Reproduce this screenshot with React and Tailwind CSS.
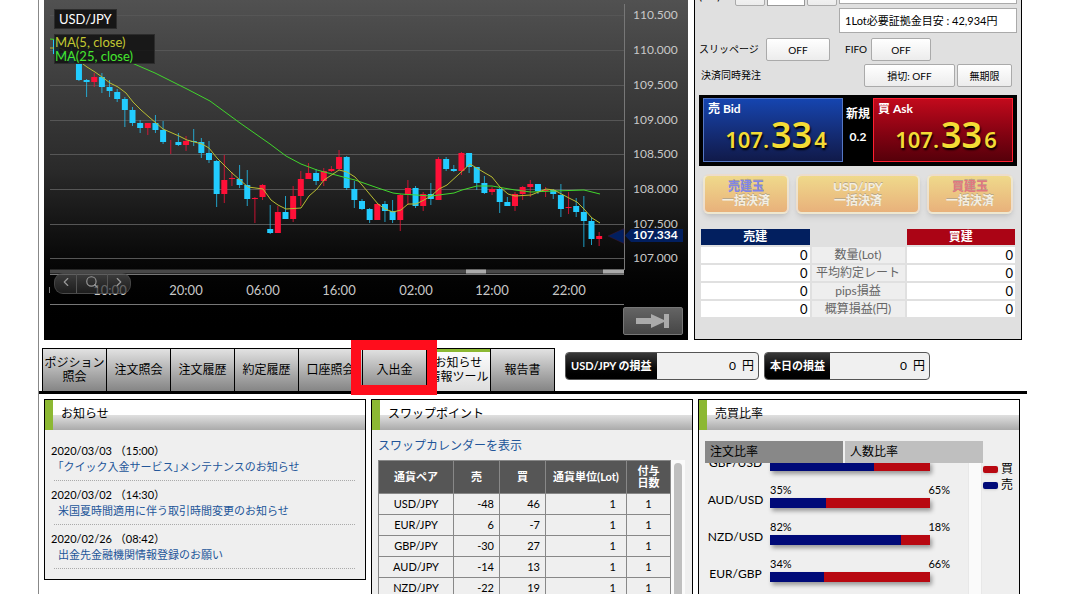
import React from "react";
import { ChevronLeft, ChevronRight, Search } from "lucide-react";

const UP = "#ff1038";
const DOWN = "#22ccff";

// [direction, high, low, body top, body bottom]
const CANDLES = [
  ["d", 38, 55, 39, 54],
  ["d", 50, 60, 53, 57],
  ["d", 47, 63, 56, 63],
  ["d", 62, 81, 63, 80],
  ["d", 79, 97, 80, 82],
  ["u", 73, 87, 77, 82],
  ["d", 73, 93, 77, 87],
  ["d", 80, 97, 87, 91],
  ["d", 89, 102, 92, 99],
  ["d", 97, 127, 99, 110],
  ["d", 107, 126, 110, 123],
  ["d", 120, 133, 123, 128],
  ["u", 123, 135, 123, 128],
  ["d", 115, 133, 123, 130],
  ["d", 121, 144, 130, 142],
  ["u", 140, 154, 142, 142],
  ["d", 133, 146, 142, 145],
  ["u", 136, 151, 141, 145],
  ["d", 129, 146, 141, 142],
  ["d", 138, 158, 142, 153],
  ["d", 141, 163, 153, 160],
  ["d", 160, 207, 161, 194],
  ["u", 155, 203, 180, 194],
  ["u", 172, 186, 178, 179],
  ["d", 165, 188, 179, 185],
  ["d", 170, 206, 185, 199],
  ["u", 197, 223, 198, 199],
  ["u", 184, 200, 185, 197],
  ["d", 205, 234, 229, 233],
  ["u", 206, 233, 212, 233],
  ["d", 196, 219, 212, 219],
  ["u", 186, 222, 196, 219],
  ["u", 171, 206, 179, 196],
  ["u", 163, 179, 173, 179],
  ["d", 169, 185, 173, 181],
  ["u", 168, 186, 171, 181],
  ["u", 166, 172, 169, 171],
  ["u", 150, 170, 157, 169],
  ["d", 156, 190, 157, 188],
  ["d", 181, 208, 189, 200],
  ["d", 199, 210, 201, 209],
  ["d", 208, 223, 209, 220],
  ["u", 203, 220, 204, 220],
  ["d", 201, 222, 204, 211],
  ["d", 200, 223, 211, 220],
  ["u", 194, 231, 195, 220],
  ["u", 180, 205, 188, 195],
  ["d", 186, 208, 188, 206],
  ["u", 192, 211, 194, 206],
  ["d", 183, 205, 194, 199],
  ["u", 157, 200, 159, 200],
  ["d", 157, 171, 159, 169],
  ["d", 165, 172, 169, 171],
  ["u", 152, 175, 153, 171],
  ["d", 153, 173, 153, 167],
  ["d", 167, 190, 167, 183],
  ["d", 176, 194, 183, 193],
  ["u", 187, 195, 189, 192],
  ["d", 188, 213, 189, 202],
  ["d", 197, 206, 202, 206],
  ["u", 192, 211, 194, 206],
  ["u", 186, 200, 187, 194],
  ["u", 180, 197, 184, 187],
  ["d", 184, 194, 184, 191],
  ["u", 187, 197, 190, 191],
  ["d", 189, 199, 190, 194],
  ["d", 184, 217, 195, 209],
  ["u", 192, 214, 207, 208],
  ["d", 198, 217, 206, 212],
  ["d", 196, 247, 212, 221],
  ["d", 218, 245, 221, 239],
  ["u", 232, 246, 236, 239],
];

const MA5 =
  "50,48 60,48 70,53 79,61 87,67 95,72 102,77 110,83 118,87 126,93 133,102 141,110 149,117 156,123 163,129 179,136 187,140 202,144 209,148 217,158 224,165 232,173 248,187 263,189 271,200 278,205 286,209 301,208 309,196 317,189 324,180 339,170 347,172 355,177 362,185 378,204 385,209 393,212 401,210 408,204 416,204 424,200 431,196 439,189 447,185 470,164 485,173 492,177 500,187 508,194 515,196 531,195 546,189 554,190 569,198 577,202 584,209 592,218 600,223";
const MA25 =
  "50,39 60,40 100,50 125,60 155,73 187,89 210,101 240,123 270,144 286,156 301,164 317,170 332,174 347,178 355,180 378,188 393,193 401,194 416,195 431,196 454,193 462,190 477,186 492,186 515,190 531,192 554,191 584,190 600,194";

const PRICES = [
  ["110.500", 15],
  ["110.000", 50],
  ["109.500", 85],
  ["109.000", 120],
  ["108.500", 154],
  ["108.000", 189],
  ["107.500", 224],
  ["107.000", 258],
];
const TIMES = [
  ["10:00", 110],
  ["20:00", 186],
  ["06:00", 263],
  ["16:00", 339],
  ["02:00", 416],
  ["12:00", 492],
  ["22:00", 569],
];

const SWAPS = [
  ["USD/JPY", -48, 46],
  ["EUR/JPY", 6, -7],
  ["GBP/JPY", -30, 27],
  ["AUD/JPY", -14, 13],
  ["NZD/JPY", -22, 19],
];

const NEWS = [
  ["2020/03/03 （15:00）", "「クイック入金サービス」メンテナンスのお知らせ"],
  ["2020/03/02 （14:30）", "米国夏時間適用に伴う取引時間変更のお知らせ"],
  ["2020/02/26 （08:42）", "出金先金融機関情報登録のお願い"],
];

const RATIOS = [
  ["GBP/USD", 65],
  ["AUD/USD", 35],
  ["NZD/USD", 82],
  ["EUR/GBP", 34],
];

const TABS = [
  ["ポジション", "照会"],
  ["注文照会"],
  ["注文履歴"],
  ["約定履歴"],
  ["口座照会"],
  ["入出金"],
  ["お知らせ", "情報ツール"],
  ["報告書"],
];

function Chart() {
  return (
    <section className="relative min-w-0 flex-1 self-start bg-linear-to-b from-[#515151] via-[#2a2a2a] to-black">
      <svg viewBox="44 0 644 340" className="block h-auto w-full" fontSize="12">
        {PRICES.map(([label, y]) => (
          <g key={label}>
            <path d={`M50 ${y + 0.5}H624`} stroke="#565656" />
            <text x="633" y={y + 4} fill="#c8c8c8">{label}</text>
          </g>
        ))}
        <path d="M624.5 4V270M50 274.5H624M50 304.5H624" stroke="#777" fill="none" />
        <path d="M50 271.5H624" stroke="#484848" strokeWidth="4" />
        <path d="M466 271.5h20M603 271.5h21" stroke="#aaa" strokeWidth="4" />
        <path d="M49.5 287v6" stroke="#777" />

        {CANDLES.map(([dir, high, low, top, bottom], i) => {
          const x = 56 + i * 7.65;
          const color = dir === "u" ? UP : DOWN;
          return (
            <g key={i}>
              <path d={`M${x} ${high}V${low}`} stroke={color} opacity="0.75" />
              <rect x={x - 3} y={top} width="6" height={bottom - top} fill={color} />
            </g>
          );
        })}
        <polyline points={MA25} fill="none" stroke="#41d62c" />
        <polyline points={MA5} fill="none" stroke="#b9bd32" />

        {TIMES.map(([label, x]) => (
          <text key={label} x={x} y="295" textAnchor="middle" fill="#c8c8c8" fontSize="13">{label}</text>
        ))}

        <path d="M608 236L624 228.500V243.500Z" fill="#021f5f" stroke="#47182c" strokeWidth="0.5" />
        <path d="M625 235.500L631 229H683V242H631Z" fill="#021f5f" />
        <text x="633" y="239" fill="#fff" fontWeight="bold">107.334</text>
      </svg>

      <div className="absolute top-[9px] left-[10px] flex flex-col items-start gap-[5px]">
        <h2 className="border border-[#2c2c2c] bg-[#161616] px-1 text-[13px] leading-[18px] text-white">USD/JPY</h2>
        <div className="w-[101px] border border-[#2c2c2c] bg-[#111]/85 text-[13px] leading-[14px] whitespace-nowrap">
          <p className="text-[#c3c832]">MA(5, close)</p>
          <p className="text-[#45e62f]">MA(25, close)</p>
        </div>
      </div>

      <div className="absolute bottom-[46px] left-[10px] flex h-[21px] w-[77px] divide-x divide-[#555] overflow-hidden rounded-[9px] border border-[#555]/60 bg-linear-to-b from-[#555]/70 to-[#2b2b2b]/70 text-[#999]">
        <button aria-label="前へ" className="flex w-[23px] items-center justify-center pb-1"><ChevronLeft size={14} /></button>
        <button aria-label="拡大" className="flex w-[31px] items-center justify-center pb-1"><Search size={14} /></button>
        <button aria-label="次へ" className="flex w-[23px] items-center justify-center pb-1"><ChevronRight size={14} /></button>
      </div>

      <button aria-label="最新へ" className="absolute right-[5px] bottom-[5px] flex h-7 w-[60px] items-center justify-center rounded-xs border border-[#777] bg-linear-to-b from-[#646464] to-[#464646]">
        <svg width="34" height="16" viewBox="0 0 34 16" fill="#aaa">
          <path d="M0 5H15V1L28 7V1H33V15H28V9L15 15V11H0Z" />
        </svg>
      </button>
    </section>
  );
}

function GreyButton({ className, children, ...rest }) {
  return (
    <button
      className={`h-[23px] rounded-xs border border-[#aaa] bg-linear-to-b from-white to-[#ececec] text-[10px] leading-4 ${className}`}
      {...rest}
    >
      {children}
    </button>
  );
}

function Rate({ label, last, className }) {
  return (
    <button className={`flex min-w-0 flex-1 flex-col border text-left ${className}`}>
      <span className="px-1 pt-0.5 text-xs leading-4 font-bold text-white">{label}</span>
      <span className="flex items-baseline justify-center gap-0.5 self-stretch pl-1.5 font-['Noto_Sans',sans-serif] text-[22px] leading-9 font-semibold text-[#f4dc35] [text-shadow:1px_2px_2px_#000]">
        107.
        <b className="text-4xl leading-9 font-semibold">33</b>
        {last}
      </span>
    </button>
  );
}

function CloseButton({ title, titleClass, className }) {
  return (
    <button
      className={`rounded-md border-2 border-[#eee]/70 bg-linear-to-b from-[#efd98b] to-[#e8b17b] text-xs leading-[14px] font-bold text-[#f3efe4] shadow-md [text-shadow:0_-1px_0_#b9a88a] ${className}`}
    >
      <span className={`block ${titleClass}`}>{title}</span>
      一括決済
    </button>
  );
}

function OrderPanel() {
  return (
    <section className="-mt-[21px] flex w-[328px] shrink-0 flex-col border border-black bg-[#e0e0e0] px-1 pb-5">
      <div className="-mt-px flex items-end justify-between">
        <div className="mb-[27px] flex items-end gap-0.5">
          <label htmlFor="lot" className="w-[34px] pb-0.5 text-[11px] leading-4">(Lot)</label>
          <GreyButton className="w-[30px]" aria-label="減らす">−</GreyButton>
          <input id="lot" className="h-[23px] w-[38px] border border-[#999] bg-white text-right text-[11px]" />
          <GreyButton className="w-[30px]" aria-label="増やす">+</GreyButton>
        </div>
        <div className="flex w-[178px] flex-col gap-1">
          <div className="h-[25px] border border-[#aaa] bg-white" />
          <p className="h-[25px] border border-[#aaa] bg-white px-[5px] text-[11px] leading-[23px]">1Lot必要証拠金目安 : 42,934円</p>
        </div>
      </div>
      <div className="mt-[5px] flex items-center text-[10px]">
        <span className="w-[67px] whitespace-nowrap">スリッページ</span>
        <GreyButton className="w-16">OFF</GreyButton>
        <span className="mr-0.5 ml-[15px] w-6">FIFO</span>
        <GreyButton className="w-[60px]">OFF</GreyButton>
      </div>
      <div className="mt-[3px] flex items-center gap-0.5 pr-[5px] text-[10px]">
        <span className="ml-0.5 flex-1">決済同時発注</span>
        <GreyButton className="w-[91px]">損切: OFF</GreyButton>
        <GreyButton className="w-[55px]">無期限</GreyButton>
      </div>

      <div className="mt-2 flex h-[71px] bg-black px-1 pt-[3px] pb-1">
        <Rate label="売 Bid" last="4" className="border-[#5577c4] bg-linear-to-b from-[#1545b0] to-[#101a4a]" />
        <div className="flex w-[30px] flex-col items-center gap-[7px] pt-2 text-xs leading-4 font-bold whitespace-nowrap text-white">
          <span>新規</span>
          <span>0.2</span>
        </div>
        <Rate label="買 Ask" last="6" className="border-[#ff2030] bg-linear-to-b from-[#c20a1c] to-[#56000a]" />
      </div>

      <div className="mt-2 flex h-10 gap-[7px] px-1">
        <CloseButton title="売建玉" titleClass="text-[#8085e6]" className="w-[86px]" />
        <CloseButton title="USD/JPY" titleClass="" className="flex-1" />
        <CloseButton title="買建玉" titleClass="text-[#e07880]" className="w-[86px]" />
      </div>

      <table className="mt-[13px] w-full table-fixed border-separate border-spacing-[2px] text-[13px] leading-4">
        <colgroup>
          <col />
          <col className="w-[93px]" />
          <col />
        </colgroup>
        <thead className="text-xs leading-4 text-white">
          <tr>
            <th className="bg-[#021f5f] p-0">売建</th>
            <td />
            <th className="bg-[#ab0415] p-0">買建</th>
          </tr>
        </thead>
        <tbody>
          {["数量(Lot)", "平均約定レート", "pips損益", "概算損益(円)"].map((name) => (
            <tr key={name}>
              <td className="bg-white p-0 pr-0.5 text-right">0</td>
              <th className="bg-[#eee] p-0 text-xs leading-4 font-normal whitespace-nowrap text-[#666]">{name}</th>
              <td className="bg-white p-0 pr-0.5 text-right">0</td>
            </tr>
          ))}
        </tbody>
      </table>
    </section>
  );
}

function ProfitBox({ label, className }) {
  return (
    <div className={`flex h-7 overflow-hidden rounded-sm border border-[#555] bg-[#f0f0f0] ${className}`}>
      <span className="flex items-center bg-linear-to-b from-[#3a3a3a] to-black px-[5px] text-[11px] font-bold whitespace-nowrap text-white">{label}</span>
      <span className="flex flex-1 items-center justify-end gap-1.5 pr-1 text-xs">
        <span>0</span>
        <span>円</span>
      </span>
    </div>
  );
}

function TabBar() {
  return (
    <nav className="mt-2 flex items-end border-b-[3px] border-black pl-[3px]">
      <div className="relative flex border-r border-black">
        {TABS.map((lines, i) => (
          <button
            key={lines[0]}
            className={
              i === 6
                ? "h-[43px] w-16 border-t border-l border-black bg-linear-to-b from-white to-[#ddd] text-xs leading-[14px] whitespace-nowrap shadow-[inset_0_3px_0_#8cb833]"
                : "h-[43px] w-16 border-t border-l border-black bg-linear-to-b from-[#e2e2e2] to-[#858585] text-xs leading-[14px] whitespace-nowrap"
            }
          >
            {lines.map((line) => (
              <span key={line} className="block">{line}</span>
            ))}
          </button>
        ))}
        <div className="pointer-events-none absolute -top-2 left-[309px] h-[55px] w-[86px] border-10 border-[#ff0d1c]" />
      </div>
      <div className="mb-[11px] ml-[10px] flex gap-[5px]">
        <ProfitBox label="USD/JPY の損益" className="w-[194px]" />
        <ProfitBox label="本日の損益" className="w-[166px]" />
      </div>
    </nav>
  );
}

function Panel({ title, className, children }) {
  return (
    <section className={`min-w-0 overflow-hidden border border-black bg-[#efefef] ${className}`}>
      <h2 className="border-l-8 border-[#8cb833] bg-[linear-gradient(#fff_0_50%,#e0e0e0_50%,#aaa)] pb-0.5 pl-2 text-xs leading-7">{title}</h2>
      {children}
    </section>
  );
}

function News() {
  return (
    <Panel title="お知らせ" className="self-start">
      <ul className="pt-[13px] pb-1 text-[11px] leading-4">
        {NEWS.map(([date, text]) => (
          <li key={date} className="pb-1.5">
            <div className="mr-[10px] ml-[9px] border-b border-dotted border-[#aaa] pb-[5px]">
              <p className="-ml-[3px]">{date}</p>
              <a href="#" className="ml-1 block whitespace-nowrap text-[#225599] [font-feature-settings:'halt']">{text}</a>
            </div>
          </li>
        ))}
      </ul>
    </Panel>
  );
}

function SwapPoints() {
  return (
    <Panel title="スワップポイント" className="border-b-0">
      <a href="#" className="mt-2 ml-1.5 block text-xs leading-4 text-[#225599]">スワップカレンダーを表示</a>
      <div className="mt-1.5 flex pr-[7px] pl-1.5">
        <table className="w-full table-fixed border-collapse text-[11px] leading-4">
          <colgroup>
            <col className="w-[75px]" />
            <col className="w-[46px]" />
            <col className="w-[46px]" />
            <col className="w-[81px]" />
            <col className="w-11" />
          </colgroup>
          <thead className="bg-[#565656] leading-3 text-white">
            <tr className="h-[33px]">
              <th className="border border-[#888] p-0">通貨ペア</th>
              <th className="border border-[#888] p-0">売</th>
              <th className="border border-[#888] p-0">買</th>
              <th className="border border-[#888] p-0 whitespace-nowrap">通貨単位(Lot)</th>
              <th className="border border-[#888] p-0">付与<br />日数</th>
            </tr>
          </thead>
          <tbody>
            {SWAPS.map(([pair, sell, buy]) => (
              <tr key={pair} className="h-[21px]">
                <td className="border border-[#888] p-0 text-center">{pair}</td>
                <td className="border border-[#888] p-0 pr-[5px] text-right">{sell}</td>
                <td className="border border-[#888] p-0 pr-[5px] text-right">{buy}</td>
                <td className="border border-[#888] p-0 pr-[10px] text-right">1</td>
                <td className="border border-[#888] p-0 text-center">1</td>
              </tr>
            ))}
          </tbody>
        </table>
        <div className="w-[14px] shrink-0 bg-[#fafafa] px-[3px] pt-[3px]">
          <div className="h-full rounded-t-full bg-[#bfbfbf]" />
        </div>
      </div>
    </Panel>
  );
}

function Ratios() {
  return (
    <Panel title="売買比率" className="border-b-0">
      <div className="mt-[11px] ml-1.5 flex gap-0.5 text-xs">
        <button className="relative h-[22px] w-[138px] bg-[#888] pl-[5px] text-left">注文比率</button>
        <button className="relative h-[22px] w-[138px] bg-[#bfbfbf] pl-[5px] text-left">人数比率</button>
      </div>
      <div className="ml-1.5 flex">
        <div className="h-[140px] w-[263px] overflow-hidden text-xs leading-4">
          <ul className="-mt-[18px]">
            {RATIOS.map(([pair, sell]) => (
              <li key={pair} className="flex h-[37px] gap-1">
                <span className="w-[61px] pt-[10px] text-center whitespace-nowrap">{pair}</span>
                <div className="flex-1">
                  <p className="flex w-[180px] justify-between text-[11px] leading-4">
                    <span>{sell}%</span>
                    <span>{100 - sell}%</span>
                  </p>
                  <div className="flex h-[10px] w-40 bg-[#b80811] shadow-[2px_3px_4px_#999]">
                    <div className="bg-[#000a78]" style={{ width: `${sell}%` }} />
                  </div>
                </div>
              </li>
            ))}
          </ul>
        </div>
        <div className="w-[14px] border-x border-[#e8e8e8] bg-[#fafafa]" />
        <ul className="-mt-0.5 ml-px text-xs leading-4">
          <li className="flex items-center gap-[3px]">
            <i className="h-[7px] w-[15px] rounded-xs bg-[#b80811] shadow-sm" />買
          </li>
          <li className="flex items-center gap-[3px]">
            <i className="h-[7px] w-[15px] rounded-xs bg-[#000a78] shadow-sm" />売
          </li>
        </ul>
      </div>
    </Panel>
  );
}

export default function App() {
  return (
    <div className="h-screen overflow-hidden bg-white font-[Lato,'Noto_Sans_CJK_JP',sans-serif] text-black">
      <main className="mx-[38px] flex h-full flex-col border-l border-[#888]">
        <div className="flex gap-1.5 px-[5px]">
          <Chart />
          <OrderPanel />
        </div>
        <TabBar />
        <div className="mt-[5px] grid min-h-0 flex-1 grid-cols-3 gap-[5px] pr-[7px] pl-[5px]">
          <News />
          <SwapPoints />
          <Ratios />
        </div>
      </main>
    </div>
  );
}
